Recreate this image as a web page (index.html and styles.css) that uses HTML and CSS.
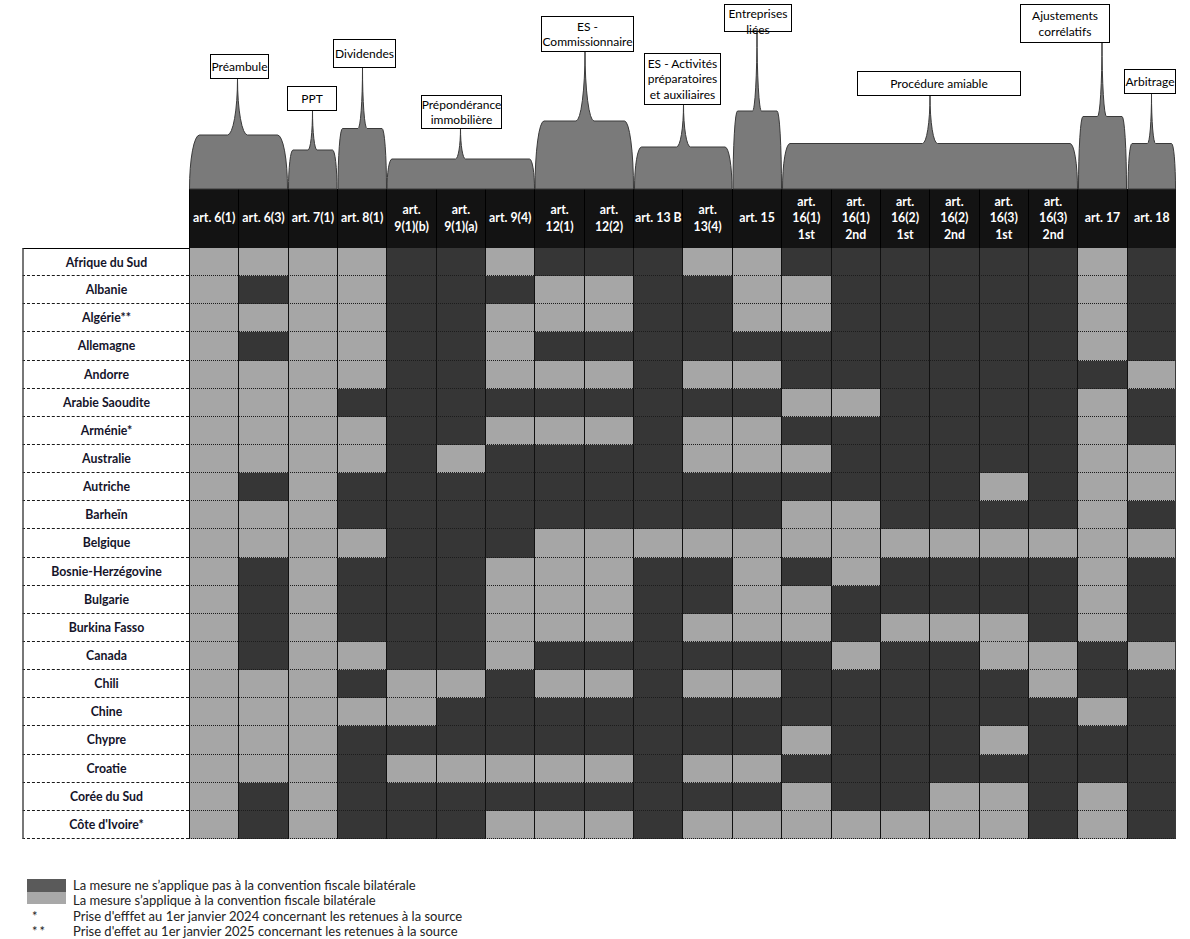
FILE: index.html
```html
<!DOCTYPE html>
<html lang="fr">
<head>
<meta charset="utf-8">
<title>Convention multilatérale</title>
<link rel="stylesheet" href="styles.css">
</head>
<body>
<div class="page">
  <div class="braces">
    <svg class="brace-svg" width="1190" height="189" viewBox="0 0 1190 189">
      <path class="brace" d="M189.5,189 A10,54 0 0 1 199.5,135 H227.5 A10,56 0 0 0 237.5,79 A10,56 0 0 0 247.5,135 H277.5 A10,54 0 0 1 287.5,189 Z"/>
      <path class="brace" d="M288.5,189 A4.5,39 0 0 1 293,150 H308 A4.5,39.5 0 0 0 312.5,110.5 A4.5,39.5 0 0 0 317,150 H332.5 A4.5,39 0 0 1 337,189 Z"/>
      <path class="brace" d="M338,189 A4.5,60.5 0 0 1 342.5,128.5 H358 A4.5,60.5 0 0 0 362.5,68 A4.5,60.5 0 0 0 367,128.5 H382 A4.5,60.5 0 0 1 386.5,189 Z"/>
      <path class="brace" d="M387,189 A5,30 0 0 1 392,159 H455.5 A5,30.5 0 0 0 460.5,128.5 A5,30.5 0 0 0 465.5,159 H529.5 A5,30 0 0 1 534.5,189 Z"/>
      <path class="brace" d="M535,189 A9,68 0 0 1 544,121 H576 A9,69.5 0 0 0 585,51.5 A9,69.5 0 0 0 594,121 H624.5 A9,68 0 0 1 633.5,189 Z"/>
      <path class="brace" d="M634.5,189 A7,42 0 0 1 641.5,147 H676.5 A7,42.5 0 0 0 683.5,104.5 A7,42.5 0 0 0 690.5,147 H725 A7,42 0 0 1 732,189 Z"/>
      <path class="brace" d="M733,189 A4.5,78 0 0 1 737.5,111 H752.5 A4.5,79 0 0 0 757,32 A4.5,79 0 0 0 761.5,111 H777 A4.5,78 0 0 1 781.5,189 Z"/>
      <path class="brace" d="M782.5,189 A7.5,45.5 0 0 1 790,143.5 H922.5 A7.5,47.5 0 0 0 930,96 A7.5,47.5 0 0 0 937.5,143.5 H1070 A7.5,45.5 0 0 1 1077.5,189 Z"/>
      <path class="brace" d="M1078.5,189 A4.5,72.5 0 0 1 1083,116.5 H1097.5 A4.5,74.5 0 0 0 1102,42 A4.5,74.5 0 0 0 1106.5,116.5 H1122 A4.5,72.5 0 0 1 1126.5,189 Z"/>
      <path class="brace" d="M1128,189 A4,45.5 0 0 1 1132,143.5 H1147.5 A4,49.5 0 0 0 1151.5,94 A4,49.5 0 0 0 1155.5,143.5 H1171.5 A4,45.5 0 0 1 1175.5,189 Z"/>
    </svg>
    <div class="lbl lb-pre">Préambule</div>
    <div class="lbl lb-ppt">PPT</div>
    <div class="lbl lb-div">Dividendes</div>
    <div class="lbl lb-imm">Prépondérance<br>immobilière</div>
    <div class="lbl lb-com">ES -<br>Commissionnaire</div>
    <div class="lbl lb-act">ES - Activités<br>préparatoires<br>et auxiliaires</div>
    <div class="lbl lb-ent">Entreprises<br>liées</div>
    <div class="lbl lb-pro">Procédure amiable</div>
    <div class="lbl lb-aju">Ajustements<br>corrélatifs</div>
    <div class="lbl lb-arb">Arbitrage</div>
  </div>

  <div class="tbl">
    <div class="thead">
      <div class="corner"></div>
      <div class="th">art. 6(1)</div>
      <div class="th">art. 6(3)</div>
      <div class="th">art. 7(1)</div>
      <div class="th">art. 8(1)</div>
      <div class="th">art.<br>9(1)(b)</div>
      <div class="th">art.<br>9(1)(a)</div>
      <div class="th">art. 9(4)</div>
      <div class="th">art.<br>12(1)</div>
      <div class="th">art.<br>12(2)</div>
      <div class="th">art. 13 B</div>
      <div class="th">art.<br>13(4)</div>
      <div class="th">art. 15</div>
      <div class="th">art.<br>16(1)<br>1st</div>
      <div class="th">art.<br>16(1)<br>2nd</div>
      <div class="th">art.<br>16(2)<br>1st</div>
      <div class="th">art.<br>16(2)<br>2nd</div>
      <div class="th">art.<br>16(3)<br>1st</div>
      <div class="th">art.<br>16(3)<br>2nd</div>
      <div class="th">art. 17</div>
      <div class="th">art. 18</div>
    </div>
    <div class="tbody">
      <div class="row first"><div class="cn">Afrique du Sud</div><div class="c l"></div><div class="c l"></div><div class="c l"></div><div class="c l"></div><div class="c d"></div><div class="c d"></div><div class="c l"></div><div class="c d"></div><div class="c d"></div><div class="c d"></div><div class="c l"></div><div class="c l"></div><div class="c d"></div><div class="c d"></div><div class="c d"></div><div class="c d"></div><div class="c d"></div><div class="c d"></div><div class="c l"></div><div class="c d"></div></div>
      <div class="row"><div class="cn">Albanie</div><div class="c l"></div><div class="c d"></div><div class="c l"></div><div class="c l"></div><div class="c d"></div><div class="c d"></div><div class="c d"></div><div class="c l"></div><div class="c l"></div><div class="c d"></div><div class="c d"></div><div class="c l"></div><div class="c l"></div><div class="c d"></div><div class="c d"></div><div class="c d"></div><div class="c d"></div><div class="c d"></div><div class="c l"></div><div class="c d"></div></div>
      <div class="row"><div class="cn">Algérie**</div><div class="c l"></div><div class="c l"></div><div class="c l"></div><div class="c l"></div><div class="c d"></div><div class="c d"></div><div class="c l"></div><div class="c l"></div><div class="c l"></div><div class="c d"></div><div class="c d"></div><div class="c l"></div><div class="c l"></div><div class="c d"></div><div class="c d"></div><div class="c d"></div><div class="c d"></div><div class="c d"></div><div class="c l"></div><div class="c d"></div></div>
      <div class="row"><div class="cn">Allemagne</div><div class="c l"></div><div class="c d"></div><div class="c l"></div><div class="c l"></div><div class="c d"></div><div class="c d"></div><div class="c l"></div><div class="c d"></div><div class="c d"></div><div class="c d"></div><div class="c d"></div><div class="c d"></div><div class="c d"></div><div class="c d"></div><div class="c d"></div><div class="c d"></div><div class="c d"></div><div class="c d"></div><div class="c l"></div><div class="c d"></div></div>
      <div class="row"><div class="cn">Andorre</div><div class="c l"></div><div class="c l"></div><div class="c l"></div><div class="c l"></div><div class="c d"></div><div class="c d"></div><div class="c l"></div><div class="c l"></div><div class="c l"></div><div class="c d"></div><div class="c l"></div><div class="c l"></div><div class="c d"></div><div class="c d"></div><div class="c d"></div><div class="c d"></div><div class="c d"></div><div class="c d"></div><div class="c d"></div><div class="c l"></div></div>
      <div class="row"><div class="cn">Arabie Saoudite</div><div class="c l"></div><div class="c l"></div><div class="c l"></div><div class="c d"></div><div class="c d"></div><div class="c d"></div><div class="c d"></div><div class="c d"></div><div class="c d"></div><div class="c d"></div><div class="c d"></div><div class="c d"></div><div class="c l"></div><div class="c l"></div><div class="c d"></div><div class="c d"></div><div class="c d"></div><div class="c d"></div><div class="c l"></div><div class="c d"></div></div>
      <div class="row"><div class="cn">Arménie*</div><div class="c l"></div><div class="c l"></div><div class="c l"></div><div class="c l"></div><div class="c d"></div><div class="c d"></div><div class="c l"></div><div class="c l"></div><div class="c l"></div><div class="c d"></div><div class="c l"></div><div class="c l"></div><div class="c d"></div><div class="c d"></div><div class="c d"></div><div class="c d"></div><div class="c d"></div><div class="c d"></div><div class="c l"></div><div class="c d"></div></div>
      <div class="row"><div class="cn">Australie</div><div class="c l"></div><div class="c l"></div><div class="c l"></div><div class="c l"></div><div class="c d"></div><div class="c l"></div><div class="c d"></div><div class="c d"></div><div class="c d"></div><div class="c d"></div><div class="c l"></div><div class="c l"></div><div class="c l"></div><div class="c d"></div><div class="c d"></div><div class="c d"></div><div class="c d"></div><div class="c d"></div><div class="c l"></div><div class="c l"></div></div>
      <div class="row"><div class="cn">Autriche</div><div class="c l"></div><div class="c d"></div><div class="c l"></div><div class="c d"></div><div class="c d"></div><div class="c d"></div><div class="c d"></div><div class="c d"></div><div class="c d"></div><div class="c d"></div><div class="c d"></div><div class="c d"></div><div class="c d"></div><div class="c d"></div><div class="c d"></div><div class="c d"></div><div class="c l"></div><div class="c d"></div><div class="c l"></div><div class="c l"></div></div>
      <div class="row"><div class="cn">Barheïn</div><div class="c l"></div><div class="c l"></div><div class="c l"></div><div class="c d"></div><div class="c d"></div><div class="c d"></div><div class="c d"></div><div class="c d"></div><div class="c d"></div><div class="c d"></div><div class="c d"></div><div class="c d"></div><div class="c l"></div><div class="c l"></div><div class="c d"></div><div class="c d"></div><div class="c d"></div><div class="c d"></div><div class="c l"></div><div class="c d"></div></div>
      <div class="row"><div class="cn">Belgique</div><div class="c l"></div><div class="c l"></div><div class="c l"></div><div class="c l"></div><div class="c d"></div><div class="c d"></div><div class="c d"></div><div class="c l"></div><div class="c l"></div><div class="c l"></div><div class="c l"></div><div class="c l"></div><div class="c l"></div><div class="c l"></div><div class="c l"></div><div class="c l"></div><div class="c l"></div><div class="c l"></div><div class="c l"></div><div class="c l"></div></div>
      <div class="row"><div class="cn">Bosnie-Herzégovine</div><div class="c l"></div><div class="c d"></div><div class="c l"></div><div class="c d"></div><div class="c d"></div><div class="c d"></div><div class="c l"></div><div class="c l"></div><div class="c l"></div><div class="c d"></div><div class="c d"></div><div class="c l"></div><div class="c d"></div><div class="c l"></div><div class="c d"></div><div class="c d"></div><div class="c d"></div><div class="c d"></div><div class="c l"></div><div class="c d"></div></div>
      <div class="row"><div class="cn">Bulgarie</div><div class="c l"></div><div class="c d"></div><div class="c l"></div><div class="c d"></div><div class="c d"></div><div class="c d"></div><div class="c l"></div><div class="c l"></div><div class="c l"></div><div class="c d"></div><div class="c d"></div><div class="c l"></div><div class="c l"></div><div class="c d"></div><div class="c d"></div><div class="c d"></div><div class="c d"></div><div class="c d"></div><div class="c l"></div><div class="c d"></div></div>
      <div class="row"><div class="cn">Burkina Fasso</div><div class="c l"></div><div class="c d"></div><div class="c l"></div><div class="c d"></div><div class="c d"></div><div class="c d"></div><div class="c l"></div><div class="c l"></div><div class="c l"></div><div class="c d"></div><div class="c l"></div><div class="c l"></div><div class="c l"></div><div class="c d"></div><div class="c l"></div><div class="c l"></div><div class="c l"></div><div class="c d"></div><div class="c l"></div><div class="c d"></div></div>
      <div class="row"><div class="cn">Canada</div><div class="c l"></div><div class="c d"></div><div class="c l"></div><div class="c l"></div><div class="c d"></div><div class="c d"></div><div class="c l"></div><div class="c d"></div><div class="c d"></div><div class="c d"></div><div class="c d"></div><div class="c d"></div><div class="c d"></div><div class="c l"></div><div class="c d"></div><div class="c d"></div><div class="c l"></div><div class="c l"></div><div class="c d"></div><div class="c l"></div></div>
      <div class="row"><div class="cn">Chili</div><div class="c l"></div><div class="c l"></div><div class="c l"></div><div class="c d"></div><div class="c l"></div><div class="c l"></div><div class="c d"></div><div class="c l"></div><div class="c l"></div><div class="c d"></div><div class="c l"></div><div class="c l"></div><div class="c d"></div><div class="c d"></div><div class="c d"></div><div class="c d"></div><div class="c d"></div><div class="c l"></div><div class="c d"></div><div class="c d"></div></div>
      <div class="row"><div class="cn">Chine</div><div class="c l"></div><div class="c l"></div><div class="c l"></div><div class="c l"></div><div class="c l"></div><div class="c d"></div><div class="c d"></div><div class="c d"></div><div class="c d"></div><div class="c d"></div><div class="c d"></div><div class="c d"></div><div class="c d"></div><div class="c d"></div><div class="c d"></div><div class="c d"></div><div class="c d"></div><div class="c d"></div><div class="c l"></div><div class="c d"></div></div>
      <div class="row"><div class="cn">Chypre</div><div class="c l"></div><div class="c l"></div><div class="c l"></div><div class="c d"></div><div class="c d"></div><div class="c d"></div><div class="c d"></div><div class="c d"></div><div class="c d"></div><div class="c d"></div><div class="c d"></div><div class="c d"></div><div class="c l"></div><div class="c d"></div><div class="c d"></div><div class="c d"></div><div class="c l"></div><div class="c d"></div><div class="c d"></div><div class="c d"></div></div>
      <div class="row"><div class="cn">Croatie</div><div class="c l"></div><div class="c l"></div><div class="c l"></div><div class="c d"></div><div class="c l"></div><div class="c l"></div><div class="c l"></div><div class="c l"></div><div class="c l"></div><div class="c d"></div><div class="c l"></div><div class="c l"></div><div class="c d"></div><div class="c d"></div><div class="c d"></div><div class="c d"></div><div class="c d"></div><div class="c d"></div><div class="c d"></div><div class="c d"></div></div>
      <div class="row"><div class="cn">Corée du Sud</div><div class="c l"></div><div class="c d"></div><div class="c l"></div><div class="c d"></div><div class="c d"></div><div class="c d"></div><div class="c d"></div><div class="c d"></div><div class="c d"></div><div class="c d"></div><div class="c d"></div><div class="c d"></div><div class="c l"></div><div class="c d"></div><div class="c d"></div><div class="c l"></div><div class="c l"></div><div class="c d"></div><div class="c l"></div><div class="c d"></div></div>
      <div class="row"><div class="cn">Côte d'Ivoire*</div><div class="c l"></div><div class="c d"></div><div class="c l"></div><div class="c d"></div><div class="c d"></div><div class="c d"></div><div class="c l"></div><div class="c l"></div><div class="c l"></div><div class="c d"></div><div class="c l"></div><div class="c l"></div><div class="c l"></div><div class="c l"></div><div class="c l"></div><div class="c l"></div><div class="c l"></div><div class="c d"></div><div class="c l"></div><div class="c d"></div></div>
    </div>
  </div>

  <div class="legend">
    <div class="swatch"><div class="sw-d"></div><div class="sw-l"></div></div>
    <div class="lg-text">La mesure ne s’applique pas à la convention fiscale bilatérale</div>
    <div class="lg-text">La mesure s’applique à la convention fiscale bilatérale</div>
    <div class="lg-mark">*</div>
    <div class="lg-text">Prise d'efffet au 1er janvier 2024 concernant les retenues à la source</div>
    <div class="lg-mark two">**</div>
    <div class="lg-text">Prise d'effet au 1er janvier 2025 concernant les retenues à la source</div>
  </div>
</div>
</body>
</html>
```
FILE: styles.css
```css
html, body {
  margin: 0;
  padding: 0;
  background: #ffffff;
}

body {
  font-family: Lato, "Open Sans", "DejaVu Sans", sans-serif;
  color: #111111;
}

.page {
  width: 1190px;
  height: 939px;
  overflow: hidden;
}

/* ---------- accolades ---------- */
.braces {
  position: relative;
  height: 189px;
}

.brace-svg {
  display: block;
  overflow: visible;
}

.brace {
  fill: #7a7a7a;
  stroke: #3a3a3a;
  stroke-width: 1;
}

.lbl {
  position: absolute;
  box-sizing: border-box;
  border: 1px solid #000000;
  background: #ffffff;
  display: flex;
  align-items: center;
  justify-content: center;
  text-align: center;
  font-size: 12px;
  line-height: 15.5px;
  color: #000000;
  white-space: nowrap;
}

.lb-pre { left: 210px; top: 54px; width: 59px; height: 25px; }
.lb-ppt { left: 287px; top: 86px; width: 50px; height: 25px; }
.lb-div { left: 333px; top: 39px; width: 63px; height: 29px; }
.lb-imm { left: 421px; top: 95px; width: 81px; height: 34px; }
.lb-com { left: 541px; top: 16px; width: 93px; height: 36px; }
.lb-act { left: 644px; top: 53px; width: 77px; height: 52px; }
.lb-ent { left: 724px; top: 4px; width: 68px; height: 28px; align-items: flex-start; padding-top: 1px; }
.lb-pro { left: 857px; top: 71px; width: 164px; height: 25px; }
.lb-aju { left: 1020px; top: 4px; width: 90px; height: 39px; }
.lb-arb { left: 1124px; top: 69px; width: 52px; height: 25px; }

/* ---------- tableau ---------- */
.tbl {
  margin-left: 22px;
  width: 1154px;
}

.thead {
  display: grid;
  grid-template-columns: 167px repeat(20, 1fr);
  height: 59px;
}

.corner {
  background: transparent;
}

.th {
  box-sizing: border-box;
  background: #131313;
  border-left: 1px solid #000000;
  color: #ffffff;
  font-weight: 700;
  font-size: 12.3px;
  line-height: 16.5px;
  display: flex;
  align-items: center;
  justify-content: center;
  text-align: center;
  white-space: nowrap;
}

.tbody {
  height: 591px;
  display: grid;
  grid-template-rows: repeat(21, 1fr);
}

.row {
  display: grid;
  grid-template-columns: 167px repeat(20, 1fr);
}

.cn {
  box-sizing: border-box;
  background: #ffffff;
  border-left: 2px solid #777777;
  border-bottom: 1px dashed #1a1a1a;
  display: flex;
  align-items: center;
  justify-content: center;
  font-weight: 700;
  font-size: 12.3px;
  color: #14142a;
}

.row.first .cn {
  border-top: 1px solid #000000;
}

.c {
  box-sizing: border-box;
  border-left: 1px solid #111111;
  border-bottom: 1px dotted #1c1c1c;
}

.c:last-child {
  border-right: 1px solid #3a3a3a;
}

.c.l { background: #a6a6a6; }
.c.d { background: #363636; }

/* ---------- légende ---------- */
.legend {
  margin: 39px 0 0 27px;
  display: grid;
  grid-template-columns: 46px auto;
  grid-auto-rows: 15.3px;
  font-size: 13px;
  color: #222222;
}

.swatch {
  grid-row: 1 / span 2;
  grid-column: 1;
  width: 39px;
  height: 25px;
  margin-top: 1px;
  display: flex;
  flex-direction: column;
}

.sw-d { flex: 1; background: #5a5a5a; }
.sw-l { flex: 1; background: #a8a8a8; }

.lg-text {
  grid-column: 2;
  line-height: 15.3px;
  white-space: nowrap;
}

.lg-mark {
  grid-column: 1;
  padding-left: 5px;
  line-height: 15.3px;
}

.lg-mark.two {
  letter-spacing: 2px;
}
```
